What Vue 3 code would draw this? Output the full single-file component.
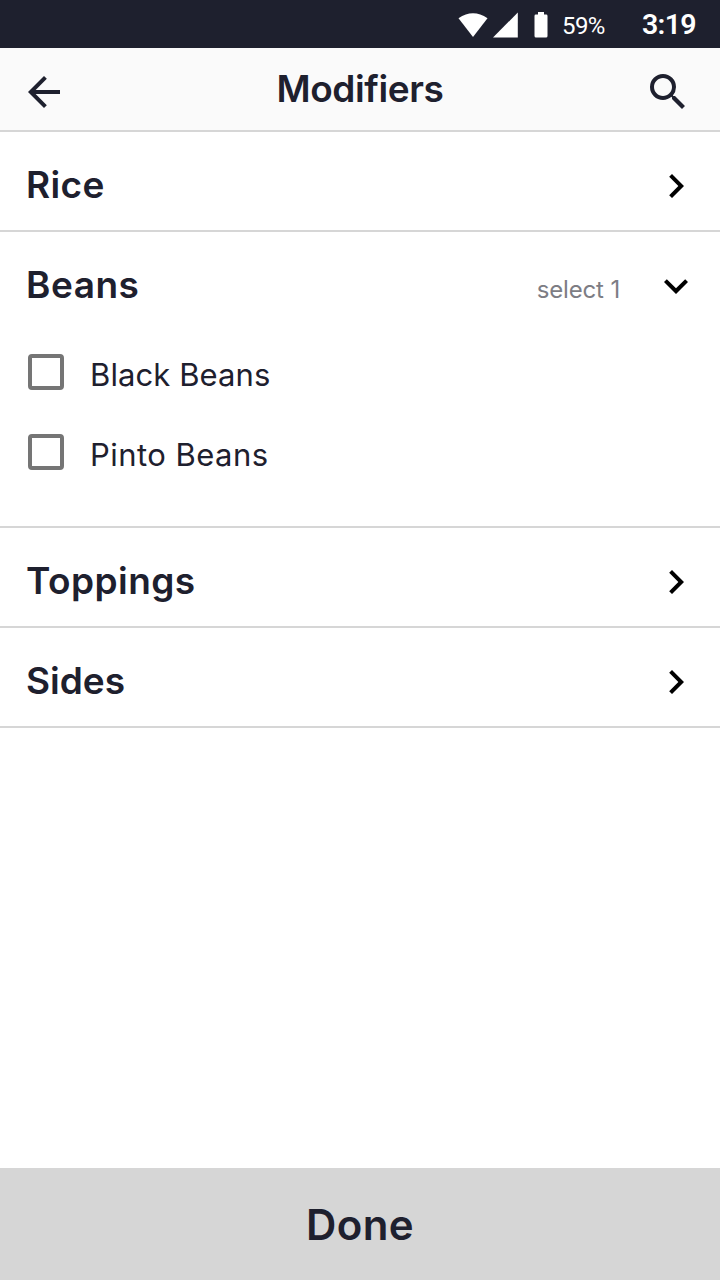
<script setup>
import { ref } from 'vue'

const groups = ref([
  { name: 'Rice', slug: 'rice', open: false, options: [] },
  {
    name: 'Beans',
    slug: 'beans',
    open: true,
    hint: 'select 1',
    options: [
      { name: 'Black Beans', slug: 'black', checked: false },
      { name: 'Pinto Beans', slug: 'pinto', checked: false },
    ],
  },
  { name: 'Toppings', slug: 'toppings', open: false, options: [] },
  { name: 'Sides', slug: 'sides', open: false, options: [] },
])
</script>

<template>
  <div class="screen">
    <div class="status">
      <svg class="wifi" width="30" height="24" viewBox="0 0 30 24"><path d="M0.5 5.2Q15-4.6 29.5 5.2L15 24Z" /></svg>
      <svg class="signal" width="26" height="26" viewBox="0 0 26 26"><path d="M24.8 0.5V25.5H0Z" /></svg>
      <svg class="battery" width="14" height="26" viewBox="0 0 14 26"><path d="M4 0h6v2.5h2.2q1.3 0 1.3 1.4v20q0 1.6-1.5 1.6H2q-1.5 0-1.5-1.6v-20q0-1.4 1.3-1.4H4Z" /></svg>
      <span class="percent">59%</span>
      <span class="clock">3:19</span>
    </div>
    <header class="bar">
      <svg class="icon" viewBox="0 0 24 24"><path d="M20 11H7.83l5.59-5.59L12 4l-8 8 8 8 1.41-1.41L7.83 13H20v-2z" /></svg>
      <h1>Modifiers</h1>
      <svg class="icon" viewBox="0 0 24 24"><path d="M15.5 14h-.79l-.28-.27A6.47 6.47 0 0 0 16 9.5 6.5 6.5 0 1 0 9.5 16c1.61 0 3.09-.59 4.23-1.57l.27.28v.79l5 4.99L20.49 19l-4.99-5zm-6 0C7.01 14 5 11.99 5 9.5S7.01 5 9.5 5 14 7.01 14 9.5 11.99 14 9.5 14z" /></svg>
    </header>
    <section v-for="g in groups" :key="g.slug" class="group">
      <div class="head" @click="g.open = !g.open">
        <h2 :class="g.slug">{{ g.name }}</h2>
        <span v-if="g.hint" class="hint">{{ g.hint }}</span>
        <svg class="icon chevron" viewBox="0 0 24 24">
          <path v-if="g.open" d="M16.59 8.59L12 13.17 7.41 8.59 6 10l6 6 6-6z" />
          <path v-else d="M10 6L8.59 7.41 13.17 12l-4.58 4.59L10 18l6-6z" />
        </svg>
      </div>
      <div v-if="g.open" class="options">
        <label v-for="o in g.options" :key="o.slug" class="option">
          <span class="box" @click="o.checked = !o.checked"></span>
          <span class="label" :class="o.slug">{{ o.name }}</span>
        </label>
      </div>
    </section>
    <button class="done">Done</button>
  </div>
</template>

<style>
body { background: #fff; }
</style>

<style scoped>
* { box-sizing: border-box; }
.screen {
  width: 720px;
  height: 1280px;
  display: flex;
  flex-direction: column;
  overflow: hidden;
  background: #fff;
  color: #1e202e;
  font-family: Inter, Roboto, sans-serif;
}
svg { display: block; flex: none; }
.status {
  height: 48px;
  flex: none;
  display: flex;
  align-items: flex-start;
  padding-left: 458px;
  background: #1e202e;
  color: #fff;
  font-family: Roboto, sans-serif;
}
.status svg { fill: #fff; }
.wifi { margin-top: 13px; }
.signal { margin: 12px 0 0 5px; }
.battery { margin: 12px 0 0 15px; }
.percent { width: 80px; margin-left: 14px; font-size: 24px; line-height: 52px; letter-spacing: -0.6px; }
.clock { font-size: 28.5px; font-weight: 600; line-height: 50px; letter-spacing: -0.7px; }
.bar {
  height: 84px;
  flex: none;
  display: flex;
  align-items: flex-start;
  padding: 20px 28px 0 20px;
  background: #fafafa;
  border-bottom: 2px solid #d6d6d6;
}
.icon { width: 48px; height: 48px; fill: #1e202e; }
h1, h2 { margin: 0; font-size: 37px; font-weight: 600; line-height: 48px; }
h1 { flex: 1; margin-top: -3px; text-align: center; padding-left: 8px; letter-spacing: -0.4px; }
.group { flex: none; border-bottom: 2px solid #d6d6d6; }
.head {
  height: 98px;
  display: flex;
  align-items: flex-start;
  padding: 29px 20px 0 26px;
}
h2 { flex: 1; }
.rice { letter-spacing: 0.4px; }
.beans { letter-spacing: 0.5px; }
.toppings { letter-spacing: 0.45px; }
.chevron { margin: 1px 0 0 32px; fill: #000; }
.hint { color: #7d7d84; font-size: 24px; line-height: 48px; margin-top: 5px; letter-spacing: -0.15px; }
.options { padding: 4px 28px 32px; }
.option { display: flex; height: 80px; padding-top: 20px; }
.box { flex: none; width: 36px; height: 36px; border: 4px solid #757575; border-radius: 4px; }
.label { margin-left: 26px; font-size: 31px; line-height: 42px; }
.black { letter-spacing: 0.1px; }
.pinto { letter-spacing: 0.45px; }
.done {
  flex: none;
  height: 112px;
  margin-top: auto;
  padding: 1px 0 0;
  border: 0;
  background: #d6d6d6;
  color: inherit;
  font: 600 42px/48px Inter, Roboto, sans-serif;
  letter-spacing: 0.4px;
}
</style>
